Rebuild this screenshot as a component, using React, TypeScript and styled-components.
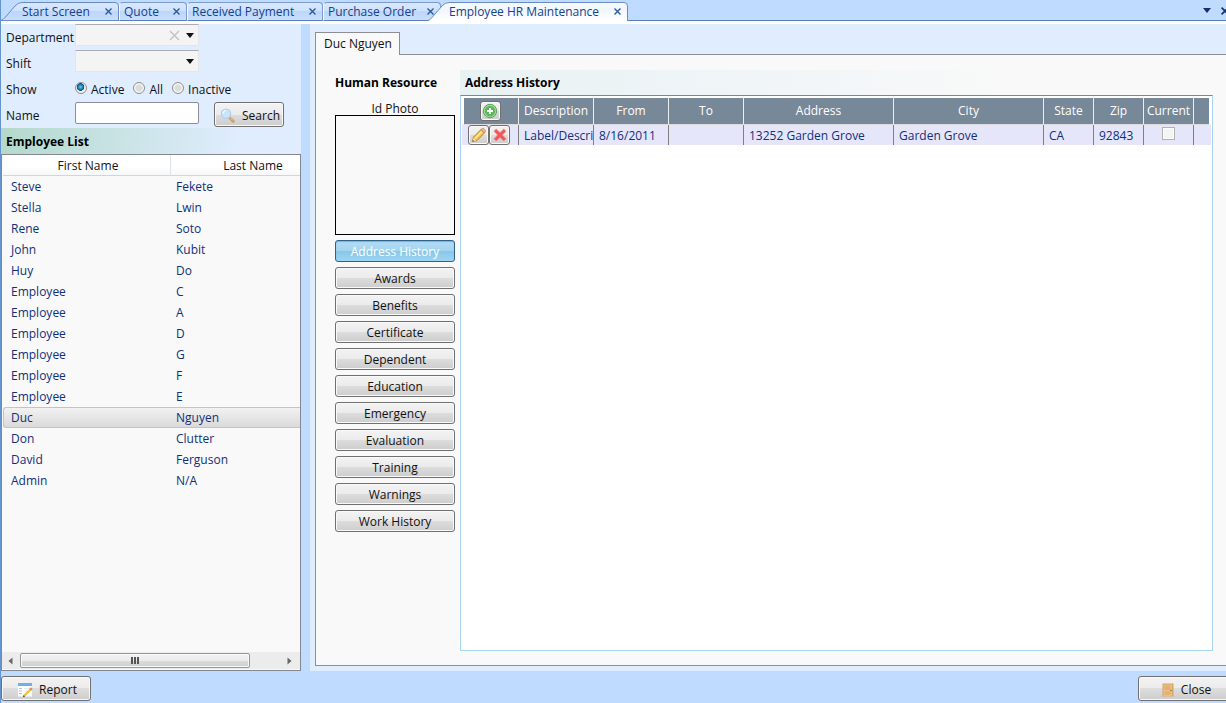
import React, { useState } from "react";
import styled, { createGlobalStyle, css } from "styled-components";

const GlobalStyle = createGlobalStyle`
  *, *::before, *::after { box-sizing: border-box; }
  body {
    margin: 0;
    background: #bfdbff;
    color: #111;
    font: 12px/16px "Open Sans", "Noto Sans", sans-serif;
  }
  button, input, select { font: inherit; color: inherit; margin: 0; }
  button { cursor: pointer; }
  table { border-collapse: separate; border-spacing: 0; table-layout: fixed; }
  th { font-weight: normal; }
`;

const Viewport = styled.div`
  overflow: hidden;
`;

const Screen = styled.div`
  display: flex;
  flex-direction: column;
  min-height: 100vh;
  width: calc(100% + 6px);
  border-left: 1px solid #6593cf;
`;

/* Document tabs */

const TabBar = styled.header`
  display: flex;
  align-items: flex-end;
  height: 24px;
  padding-bottom: 3px;
  background: linear-gradient(#bfdbff 20px, #5b7fb8 20px, #5b7fb8 21px, #fff 21px);
`;

const TabList = styled.nav`
  display: flex;
  flex: 1;
`;

const TabItem = styled.div<{ $width: number; $active?: boolean; $slanted?: boolean }>`
  position: relative;
  display: flex;
  align-items: center;
  justify-content: space-between;
  width: ${(p) => p.$width}px;
  height: 19px;
  padding: 0 6px 0 4px;
  color: #15428b;
  border: 1px solid #7a9bcb;
  border-left-color: #f2f8ff;
  border-bottom-color: #5b7fb8;
  border-radius: 4px 4px 0 0;
  background: linear-gradient(#d9e8fd, #cfe2fd 45%, #bcd7fb 50%, #c8defc);
  ${(p) =>
    p.$slanted &&
    css`
      padding: 0 7px 0 21px;
      border: 0;
      background: none;
    `}
  ${(p) =>
    p.$active &&
    css`
      margin-left: -13px;
    `}
`;

const TabShape = styled.svg`
  position: absolute;
  inset: 0;
  width: 100%;
  height: 100%;
`;

const TabLabel = styled.button`
  position: relative;
  padding: 0;
  border: 0;
  background: none;
  white-space: nowrap;
`;

const GlyphButton = styled.button`
  position: relative;
  display: flex;
  padding: 0;
  border: 0;
  background: none;
  color: #2a5a9c;
`;

const TabTools = styled.div`
  display: flex;
  align-items: center;
  gap: 10px;
  height: 21px;
  padding-right: 3px;
`;

const ToolButton = styled(GlyphButton)`
  color: #12316f;
`;

/* Panels */

const Main = styled.main`
  display: flex;
  flex: 1;
  gap: 9px;
`;

const Side = styled.aside`
  display: flex;
  flex-direction: column;
  width: 300px;
  flex: none;
  background: #e0edff;
`;

const FilterForm = styled.form`
  display: flex;
  flex-direction: column;
  gap: 4px;
  height: 104px;
`;

const Field = styled.div`
  display: flex;
  align-items: flex-start;
  height: 22px;
  padding-left: 5px;
`;

const FieldLabel = styled.label`
  width: 69px;
  padding-top: 6px;
`;

const Combo = styled.div`
  position: relative;
  display: flex;
  width: 124px;
  height: 22px;
`;

const ComboSelect = styled.select`
  appearance: none;
  width: 100%;
  border: 1px solid #e4e6ea;
  border-top-color: #abadb3;
  border-radius: 0;
  background: #f4f4f4;
`;

const ComboGlyphs = styled.div`
  position: absolute;
  top: 1px;
  right: 1px;
  bottom: 1px;
  display: flex;
  align-items: center;
  gap: 6px;
  padding-right: 4px;
  pointer-events: none;
`;

const RadioLabel = styled.label`
  display: flex;
  align-items: flex-start;
  gap: 4px;
  margin-right: 9px;
  padding-top: 6px;
`;

const Radio = styled.input`
  appearance: none;
  width: 12px;
  height: 12px;
  border: 1px solid #8e8f8f;
  border-radius: 50%;
  background: radial-gradient(#dcdcdc 40%, #f6f6f6 60%);
  &:checked {
    background: radial-gradient(circle at 45% 40%, #5fd0f5 0, #1c7db5 30%, #12456f 44%, #f0f0f0 50%);
  }
`;

const NameInput = styled.input`
  width: 124px;
  height: 22px;
  margin-right: 15px;
  padding: 0 4px;
  border: 1px solid #8a9099;
  border-radius: 2px;
  background: #fff;
`;

const raised = css`
  border: 1px solid #707070;
  border-radius: 3px;
  background: linear-gradient(#f3f3f3, #ebebeb 50%, #dddddd 50%, #cdcdcd);
  box-shadow: inset 0 0 0 1px #f9f9f9;
`;

const CommandButton = styled.button<{ $width: number }>`
  ${raised}
  display: flex;
  flex: none;
  align-items: center;
  justify-content: center;
  gap: 6px;
  width: ${(p) => p.$width}px;
  height: 25px;
  padding: 2px 0 0 2px;
`;

const ListTitle = styled.h2`
  height: 26px;
  margin: 0;
  padding: 6px 5px;
  font-size: 12px;
  line-height: 16px;
  color: #000;
  background: linear-gradient(100deg, #b3d9cb, #e0edff 80%);
`;

const ListFrame = styled.div`
  display: flex;
  flex: 1;
  flex-direction: column;
  padding-bottom: 1px;
  border: 1px solid #828790;
  background: #f9f9f9;
`;

const ListViewport = styled.div`
  flex: 1;
  overflow: hidden;
`;

const NameTable = styled.table`
  width: 332px;
  margin-left: 1px;
  color: #10307c;
  th {
    height: 21px;
    padding: 2px 0 0;
    color: #111;
    background: linear-gradient(#fff 55%, #f7f8fa);
    border-bottom: 1px solid #d5d5d5;
  }
  th:first-child {
    width: 168px;
    padding-left: 3px;
    border-right: 1px solid #dfe2e6;
  }
  td {
    height: 21px;
    padding: 0 5px;
    border: solid transparent;
    border-width: 1px 0;
  }
  td:first-child { padding-left: 8px; }
`;

const NameRow = styled.tr<{ $selected: boolean }>`
  ${(p) =>
    p.$selected &&
    css`
      td {
        background: linear-gradient(#f2f2f2, #dadada);
        border-color: #c4c4c4;
      }
      td:first-child {
        border-left: 1px solid #c4c4c4;
        border-radius: 3px 0 0 3px;
        padding-left: 7px;
      }
    `}
`;

const ScrollBar = styled.div`
  display: flex;
  align-items: center;
  height: 17px;
  padding: 0 8px 0 6px;
  background: #ececec;
`;

const ScrollThumb = styled.div`
  ${raised}
  display: flex;
  align-items: center;
  justify-content: center;
  gap: 1px;
  width: 230px;
  height: 15px;
  margin: 0 auto 0 7px;
  border-color: #979797;
  border-radius: 2px;
`;

const Grip = styled.i`
  width: 2px;
  height: 7px;
  background: #555;
`;

const Detail = styled.section`
  display: flex;
  flex: 1;
  flex-direction: column;
  min-width: 0;
  padding: 8px 0 5px 5px;
  background: #e0edff;
`;

const DetailTab = styled.button`
  align-self: flex-start;
  z-index: 1;
  height: 23px;
  margin-bottom: -1px;
  padding: 0 7px 0 8px;
  border: 1px solid #8c8e94;
  border-bottom: 0;
  background: #f9f9f9;
`;

const DetailPane = styled.div`
  display: flex;
  flex: 1;
  gap: 5px;
  padding: 15px 18px 14px 19px;
  border: 1px solid #8c8e94;
  background: #f9f9f9;
`;

const ResourceColumn = styled.div`
  display: flex;
  flex-direction: column;
  gap: 5px;
  width: 120px;
  flex: none;
`;

const SectionTitle = styled.h2`
  height: 25px;
  margin: 0;
  padding-top: 5px;
  font-size: 12px;
  line-height: 16px;
  color: #000;
`;

const Photo = styled.figure`
  display: flex;
  flex-direction: column;
  height: 135px;
  margin: 0;
  figcaption {
    height: 15px;
    padding-top: 1px;
    text-align: center;
  }
`;

const PhotoFrame = styled.div`
  flex: 1;
  border: 1px solid #000;
`;

const SectionButton = styled.button<{ $active: boolean }>`
  ${raised}
  height: 22px;
  padding: 2px 0 0;
  ${(p) =>
    p.$active &&
    css`
      color: #fff;
      border-color: #2c628b;
      background: linear-gradient(#b4dcf3, #a3d4f0 50%, #86c6ea 50%, #9ed5f3);
      box-shadow: inset 0 1px 1px #7fb2d1;
    `}
`;

const GridColumn = styled.div`
  display: flex;
  flex: 1;
  flex-direction: column;
  min-width: 0;
`;

const GridTitle = styled(SectionTitle)`
  padding-left: 5px;
  background: linear-gradient(90deg, #e9f2f3, #eef4f7 30%, #f9f9f9 75%);
`;

const GridFrame = styled.div`
  flex: 1;
  padding: 2px 1px;
  border: 1px solid #a9d5f2;
  border-top-color: #5d8fbc;
  background: #fff;
`;

const Grid = styled.table`
  width: 100%;
  th {
    height: 27px;
    padding: 0;
    color: #fff;
    background: #778899;
    border-right: 1px solid #eee;
    border-bottom: 1px solid #ddd;
  }
  th:first-child {
    padding-right: 2px;
    border-left: 2px solid #fff;
  }
  th:last-child { border-right: 2px solid #fff; }
  td {
    height: 20px;
    padding: 1px 0 0 5px;
    overflow: hidden;
    white-space: nowrap;
    color: #10307c;
    background: #e6e6fa;
    border-right: 1px solid #808080;
  }
  td:first-child { padding: 0 0 0 6px; }
  td:last-child { border-right: 0; }
`;

const Actions = styled.div`
  display: flex;
  justify-content: flex-start;
`;

const IconButton = styled.button`
  ${raised}
  display: flex;
  align-items: center;
  justify-content: center;
  width: 21px;
  height: 20px;
  padding: 0;
`;

const AddButton = styled(IconButton)`
  margin: 0 auto;
`;

const CheckBox = styled.input`
  appearance: none;
  display: block;
  width: 13px;
  height: 13px;
  margin: 0 0 4px 13px !important;
  border: 1px solid #b1b1b1;
  background: #f4f4f4;
  box-shadow: inset 0 0 0 1px #fcfcfc;
`;

const Footer = styled.footer`
  display: flex;
  justify-content: space-between;
  height: 32px;
  padding-top: 5px;
`;

const CloseGlyph = ({ size = 7 }: { size?: number }) => (
  <svg width={size} height={size} viewBox="0 0 7 7" aria-hidden="true">
    <path d="M.5.5l6 6M6.5.5l-6 6" stroke="currentColor" strokeWidth="1.4" fill="none" />
  </svg>
);

const ArrowDown = () => (
  <svg width="8" height="5" viewBox="0 0 8 5" aria-hidden="true">
    <path d="M0 0h8L4 5z" fill="currentColor" />
  </svg>
);

const ArrowSide = ({ right }: { right?: boolean }) => (
  <svg width="5" height="8" viewBox="0 0 5 8" aria-hidden="true">
    <path d={right ? "M.5 .5v7l4-3.500z" : "M4.500 .5v7L.5 4z"} fill="#666" />
  </svg>
);

const SearchIcon = () => (
  <svg width="16" height="16" viewBox="0 0 16 16" aria-hidden="true">
    <path d="M9.500 9.500l3.700 3.700" stroke="#cf9a66" strokeWidth="3" strokeLinecap="round" />
    <path d="M9.500 9l3.500 3.500" stroke="#f3c896" strokeWidth="1" />
    <circle cx="6" cy="5.800" r="4.600" fill="#c9e5fb" stroke="#b3cfec" strokeWidth="1.300" />
    <path d="M3 5.500a3 3 0 013-3" stroke="#fff" strokeWidth="1.200" fill="none" />
  </svg>
);

const AddIcon = () => (
  <svg width="16" height="16" viewBox="0 0 16 16" aria-hidden="true">
    <circle cx="8" cy="8" r="6.700" fill="#a5d89c" stroke="#4f9e50" strokeWidth=".9" />
    <circle cx="8" cy="8" r="5.200" fill="#5cb85a" />
    <path d="M8 5v6M5 8h6" stroke="#fff" strokeWidth="2" />
  </svg>
);

const PencilIcon = () => (
  <svg width="16" height="16" viewBox="0 0 16 16" aria-hidden="true">
    <path d="M1.500 14.500l1-4.500L10 2.500l3.500 3.500L6 13.500z" fill="#f3c14c" stroke="#b5782a" strokeWidth=".9" />
    <path d="M4 11.500l7-7" stroke="#fdeaa6" strokeWidth="1.500" />
    <path d="M10 2.500l1.200-1q1.300-.5 2.300.8 1.300 1.200.7 2.500L13.500 6z" fill="#f0b79a" stroke="#b8805b" strokeWidth=".7" />
    <path d="M1.500 14.500l.8-3.500 2.700 2.700z" fill="#f7dfbd" />
    <path d="M1.500 14.500l.4-1.600 1.200 1.200z" fill="#333" />
  </svg>
);

const DeleteIcon = () => (
  <svg width="14" height="14" viewBox="0 0 14 14" aria-hidden="true">
    <path
      d="M3.200 1L7 4.600 10.800 1 13 3.200 9.400 7l3.600 3.800-2.200 2.200L7 9.400 3.200 13 1 10.800 4.600 7 1 3.200z"
      fill="#f2565a"
      stroke="#ee8a88"
      strokeWidth=".8"
    />
  </svg>
);

const ReportIcon = () => (
  <svg width="16" height="16" viewBox="0 0 16 16" aria-hidden="true">
    <path d="M1 1h14v13.500H1z" fill="#fbfdff" />
    <path d="M1 1h14v3H1z" fill="#6fb0e6" />
    <path d="M2 6.500h3M2 9h3M2 11.500h3" stroke="#b3c4d8" />
    <path d="M7 6.500h7M7 9h4" stroke="#e4ecf4" />
    <path d="M7.500 13.500L14 7" stroke="#ecc22e" strokeWidth="2.200" />
    <path d="M13.200 7.800l1.600-1.600" stroke="#e8806f" strokeWidth="2.400" />
    <path d="M5.800 15.200l.8-2.500 1.700 1.700z" fill="#604838" />
  </svg>
);

const DoorIcon = () => (
  <svg width="14" height="16" viewBox="0 0 14 16" aria-hidden="true">
    <path d="M1.500 1.500h11V14h-11z" fill="#d8a564" />
    <path d="M2.500 2.500h8.500V14H2.500z" fill="#ebc088" />
    <path d="M3.500 3.500h6v4.500h-6zM3.500 9.500h6V13h-6z" fill="#e2b070" />
    <path d="M0 14h14v1H0z" fill="#d2bfa8" />
    <circle cx="10" cy="8.500" r=".8" fill="#9a6a2c" />
  </svg>
);

const SlantShape = ({ width, active }: { width: number; active?: boolean }) => (
  <TabShape viewBox={`0 0 ${width} 19`} preserveAspectRatio="none" aria-hidden="true">
    <defs>
      <linearGradient id={`tab-${width}`} x1="0" y1="0" x2="0" y2="1">
        <stop offset="0" stopColor={active ? "#f6faff" : "#d9e8fd"} />
        <stop offset=".45" stopColor={active ? "#f1f6fe" : "#cfe2fd"} />
        <stop offset=".5" stopColor={active ? "#f4f8ff" : "#bcd7fb"} />
        <stop offset="1" stopColor={active ? "#ffffff" : "#c8defc"} />
      </linearGradient>
    </defs>
    <path
      d={`M0 18.500Q2 18 4 15.500L14 4Q17 .5 21 .5H${width - 4}Q${width - 0.5} .5 ${width - 0.5} 4V${active ? "19H0" : "18.500"}z`}
      fill={`url(#tab-${width})`}
    />
    <path
      d={`M0 18.500Q2 18 4 15.500L14 4Q17 .5 21 .5H${width - 4}Q${width - 0.5} .5 ${width - 0.5} 4V19${active ? "" : "M0 18.500H" + width}`}
      fill="none"
      stroke="#6a8cc0"
    />
  </TabShape>
);

const documents = [
  { title: "Start Screen", width: 118, slanted: true },
  { title: "Quote", width: 68 },
  { title: "Received Payment", width: 136 },
  { title: "Purchase Order", width: 118 },
  { title: "Employee HR Maintenance", width: 200, slanted: true, active: true },
];

const employees = [
  ["Steve", "Fekete"],
  ["Stella", "Lwin"],
  ["Rene", "Soto"],
  ["John", "Kubit"],
  ["Huy", "Do"],
  ["Employee", "C"],
  ["Employee", "A"],
  ["Employee", "D"],
  ["Employee", "G"],
  ["Employee", "F"],
  ["Employee", "E"],
  ["Duc", "Nguyen"],
  ["Don", "Clutter"],
  ["David", "Ferguson"],
  ["Admin", "N/A"],
];

const sections = [
  "Address History",
  "Awards",
  "Benefits",
  "Certificate",
  "Dependent",
  "Education",
  "Emergency",
  "Evaluation",
  "Training",
  "Warnings",
  "Work History",
];

const GridCols = styled.colgroup`
  .tools { width: 57px; }
  .medium { width: 75px; }
  .wide { width: 150px; }
  .small { width: 50px; }
`;

export default function App() {
  const [show, setShow] = useState("Active");
  const [selected, setSelected] = useState(11);
  const [section, setSection] = useState("Address History");

  return (
    <Viewport>
      <GlobalStyle />
      <Screen>
        <TabBar>
          <TabList aria-label="Open documents">
            {documents.map((d) => (
              <TabItem key={d.title} $width={d.width} $active={d.active} $slanted={d.slanted}>
                {d.slanted && <SlantShape width={d.width} active={d.active} />}
                <TabLabel type="button">{d.title}</TabLabel>
                <GlyphButton type="button" aria-label={`Close ${d.title}`}>
                  <CloseGlyph />
                </GlyphButton>
              </TabItem>
            ))}
          </TabList>
          <TabTools>
            <ToolButton type="button" aria-label="Tab list">
              <ArrowDown />
            </ToolButton>
            <ToolButton type="button" aria-label="Close tab">
              <CloseGlyph size={8} />
            </ToolButton>
          </TabTools>
        </TabBar>

        <Main>
          <Side>
            <FilterForm onSubmit={(e) => e.preventDefault()}>
              <Field>
                <FieldLabel htmlFor="department">Department</FieldLabel>
                <Combo>
                  <ComboSelect id="department" />
                  <ComboGlyphs>
                    <svg width="11" height="11" viewBox="0 0 11 11" aria-hidden="true">
                      <path d="M1 1l9 9M10 1l-9 9" stroke="#c4c4c4" strokeWidth="1.500" />
                    </svg>
                    <ArrowDown />
                  </ComboGlyphs>
                </Combo>
              </Field>
              <Field>
                <FieldLabel htmlFor="shift">Shift</FieldLabel>
                <Combo>
                  <ComboSelect id="shift" />
                  <ComboGlyphs>
                    <ArrowDown />
                  </ComboGlyphs>
                </Combo>
              </Field>
              <Field role="radiogroup" aria-label="Show">
                <FieldLabel as="span">Show</FieldLabel>
                {["Active", "All", "Inactive"].map((s) => (
                  <RadioLabel key={s}>
                    <Radio type="radio" name="show" checked={show === s} onChange={() => setShow(s)} />
                    {s}
                  </RadioLabel>
                ))}
              </Field>
              <Field>
                <FieldLabel htmlFor="name">Name</FieldLabel>
                <NameInput id="name" />
                <CommandButton $width={70} type="submit">
                  <SearchIcon />
                  Search
                </CommandButton>
              </Field>
            </FilterForm>
            <ListTitle>Employee List</ListTitle>
            <ListFrame>
              <ListViewport>
                <NameTable>
                  <thead>
                    <tr>
                      <th>First Name</th>
                      <th>Last Name</th>
                    </tr>
                  </thead>
                  <tbody>
                    {employees.map(([first, last], i) => (
                      <NameRow key={i} $selected={i === selected} onClick={() => setSelected(i)}>
                        <td>{first}</td>
                        <td>{last}</td>
                      </NameRow>
                    ))}
                  </tbody>
                </NameTable>
              </ListViewport>
              <ScrollBar aria-hidden="true">
                <ArrowSide />
                <ScrollThumb>
                  <Grip />
                  <Grip />
                  <Grip />
                </ScrollThumb>
                <ArrowSide right />
              </ScrollBar>
            </ListFrame>
          </Side>

          <Detail>
            <DetailTab type="button">Duc Nguyen</DetailTab>
            <DetailPane>
              <ResourceColumn>
                <SectionTitle>Human Resource</SectionTitle>
                <Photo>
                  <figcaption>Id Photo</figcaption>
                  <PhotoFrame />
                </Photo>
                {sections.map((s) => (
                  <SectionButton key={s} type="button" $active={s === section} onClick={() => setSection(s)}>
                    {s}
                  </SectionButton>
                ))}
              </ResourceColumn>
              <GridColumn>
                <GridTitle>Address History</GridTitle>
                <GridFrame>
                  <Grid>
                    <GridCols>
                      <col className="tools" />
                      <col className="medium" />
                      <col className="medium" />
                      <col className="medium" />
                      <col className="wide" />
                      <col className="wide" />
                      <col className="small" />
                      <col className="small" />
                      <col className="small" />
                      <col />
                    </GridCols>
                    <thead>
                      <tr>
                        <th>
                          <AddButton type="button" aria-label="Add address">
                            <AddIcon />
                          </AddButton>
                        </th>
                        <th>Description</th>
                        <th>From</th>
                        <th>To</th>
                        <th>Address</th>
                        <th>City</th>
                        <th>State</th>
                        <th>Zip</th>
                        <th>Current</th>
                        <th />
                      </tr>
                    </thead>
                    <tbody>
                      <tr>
                        <td>
                          <Actions>
                            <IconButton type="button" aria-label="Edit address">
                              <PencilIcon />
                            </IconButton>
                            <IconButton type="button" aria-label="Delete address">
                              <DeleteIcon />
                            </IconButton>
                          </Actions>
                        </td>
                        <td>Label/Description</td>
                        <td>8/16/2011</td>
                        <td />
                        <td>13252 Garden Grove</td>
                        <td>Garden Grove</td>
                        <td>CA</td>
                        <td>92843</td>
                        <td>
                          <CheckBox type="checkbox" disabled aria-label="Current" />
                        </td>
                        <td />
                      </tr>
                    </tbody>
                  </Grid>
                </GridFrame>
              </GridColumn>
            </DetailPane>
          </Detail>
        </Main>

        <Footer>
          <CommandButton $width={90} type="button">
            <ReportIcon />
            Report
          </CommandButton>
          <CommandButton $width={94} type="button">
            <DoorIcon />
            Close
          </CommandButton>
        </Footer>
      </Screen>
    </Viewport>
  );
}
